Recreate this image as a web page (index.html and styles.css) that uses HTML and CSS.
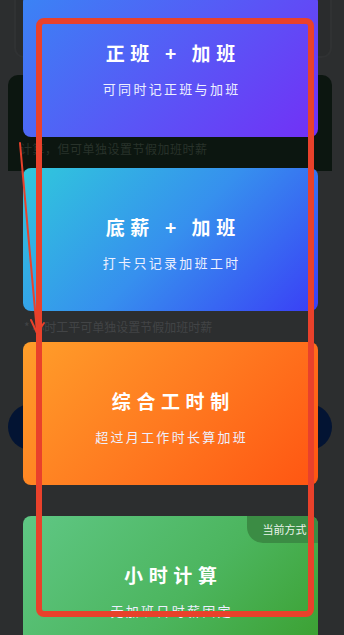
FILE: index.html
```html
<!DOCTYPE html>
<html lang="zh-CN">
<head>
<meta charset="utf-8">
<title>计算方式</title>
<link rel="stylesheet" href="styles.css">
</head>
<body>
<div class="screen">
  <div class="backdrop">
    <div class="bg-outline"></div>
    <div class="bg-panel"><span class="bg-panel-text">计算，但可单独设置节假加班时薪</span></div>
    <p class="bg-note">* 小时工平可单独设置节假加班时薪</p>
    <div class="bg-pill"></div>
  </div>

  <div class="sheet">
    <div class="card card-blue">
      <div class="card-title">正班 + 加班</div>
      <div class="card-sub">可同时记正班与加班</div>
    </div>
    <div class="card card-cyan">
      <div class="card-title">底薪 + 加班</div>
      <div class="card-sub">打卡只记录加班工时</div>
    </div>
    <div class="card card-orange">
      <div class="card-title">综合工时制</div>
      <div class="card-sub">超过月工作时长算加班</div>
    </div>
    <div class="card card-green">
      <span class="badge">当前方式</span>
      <div class="card-title">小时计算</div>
      <div class="card-sub">无加班日时薪固定</div>
    </div>
  </div>

  <svg class="annotation" width="344" height="635" viewBox="0 0 344 635" aria-hidden="true">
    <rect x="39" y="21" width="272" height="593" rx="5" ry="5" fill="none" stroke="#e9412b" stroke-width="6"/>
    <path d="M20 143 L37 332" fill="none" stroke="#e9412b" stroke-width="2" stroke-linecap="round"/>
    <path d="M31 320 L37 333 L44 323" fill="none" stroke="#e9412b" stroke-width="2" stroke-linecap="round" stroke-linejoin="round"/>
  </svg>
</div>
</body>
</html>
```

FILE: styles.css
```css
* { box-sizing: border-box; }
html, body { margin: 0; padding: 0; }
body {
  background: #2b2d2e;
  font-family: "Noto Sans CJK SC", "Noto Sans", sans-serif;
  width: 344px;
  height: 635px;
  overflow: hidden;
}
.screen {
  position: relative;
  width: 344px;
  height: 635px;
  overflow: hidden;
  background: #2c2e2f;
}

/* dimmed page behind the sheet */
.backdrop {
  position: absolute;
  inset: 0;
  display: flex;
  flex-direction: column;
}
.bg-outline {
  margin: -12px 12px 0 14px;
  height: 70px;
  border: 2px solid #303233;
  border-radius: 10px;
  background: #2a2c2d;
}
.bg-panel {
  margin: 17px 12px 0 8px;
  height: 96px;
  background: #0c1610;
  border-radius: 10px 10px 0 0;
  display: flex;
  align-items: flex-end;
  padding: 0 0 14px 12px;
}
.bg-panel-text {
  font-size: 12px;
  color: #28322a;
  letter-spacing: 0.5px;
}
.bg-note {
  margin: 149px 0 0 24px;
  font-size: 12px;
  color: #424446;
  line-height: 14px;
}
.bg-pill {
  margin: 70px 12px 0 8px;
  height: 46px;
  border-radius: 23px;
  background: #031433;
}

/* sheet of options */
.sheet {
  position: relative;
  display: flex;
  flex-direction: column;
  gap: 31px;
  padding: 0 26px 0 23px;
  margin-top: -6px;
}
.card {
  position: relative;
  height: 143px;
  border-radius: 8px;
  display: flex;
  flex-direction: column;
  align-items: center;
  padding-top: 45px;
  color: #fff;
  overflow: hidden;
}
.card-blue { background: linear-gradient(135deg, #3a84f5 0%, #5a55f6 55%, #7230f6 100%); }
.card-cyan { background: linear-gradient(135deg, #30c8dc 0%, #3690ee 50%, #3a3ef6 100%); }
.card-orange { background: linear-gradient(135deg, #ff9e2a 0%, #ff7a20 50%, #ff5512 100%); }
.card-green { background: linear-gradient(135deg, #5fc784 0%, #4cb55e 55%, #3a9f2e 100%); }

.card-title {
  font-size: 19px;
  font-weight: 700;
  letter-spacing: 5.6px;
  line-height: 28px;
  margin-right: -5.6px;
}
.card-sub {
  margin-top: 13px;
  font-size: 13px;
  letter-spacing: 2.3px;
  line-height: 18px;
  margin-right: -2.3px;
  color: #eef0ff;
}
.badge {
  position: absolute;
  top: 0;
  right: 0;
  width: 71px;
  height: 27px;
  border-radius: 0 8px 0 16px;
  background: #3b8c44;
  font-size: 11px;
  line-height: 27px;
  text-align: center;
  padding-left: 4px;
  color: #eaf5ea;
}

/* screenshot annotation */
.annotation {
  position: absolute;
  left: 0;
  top: 0;
  pointer-events: none;
}
```
